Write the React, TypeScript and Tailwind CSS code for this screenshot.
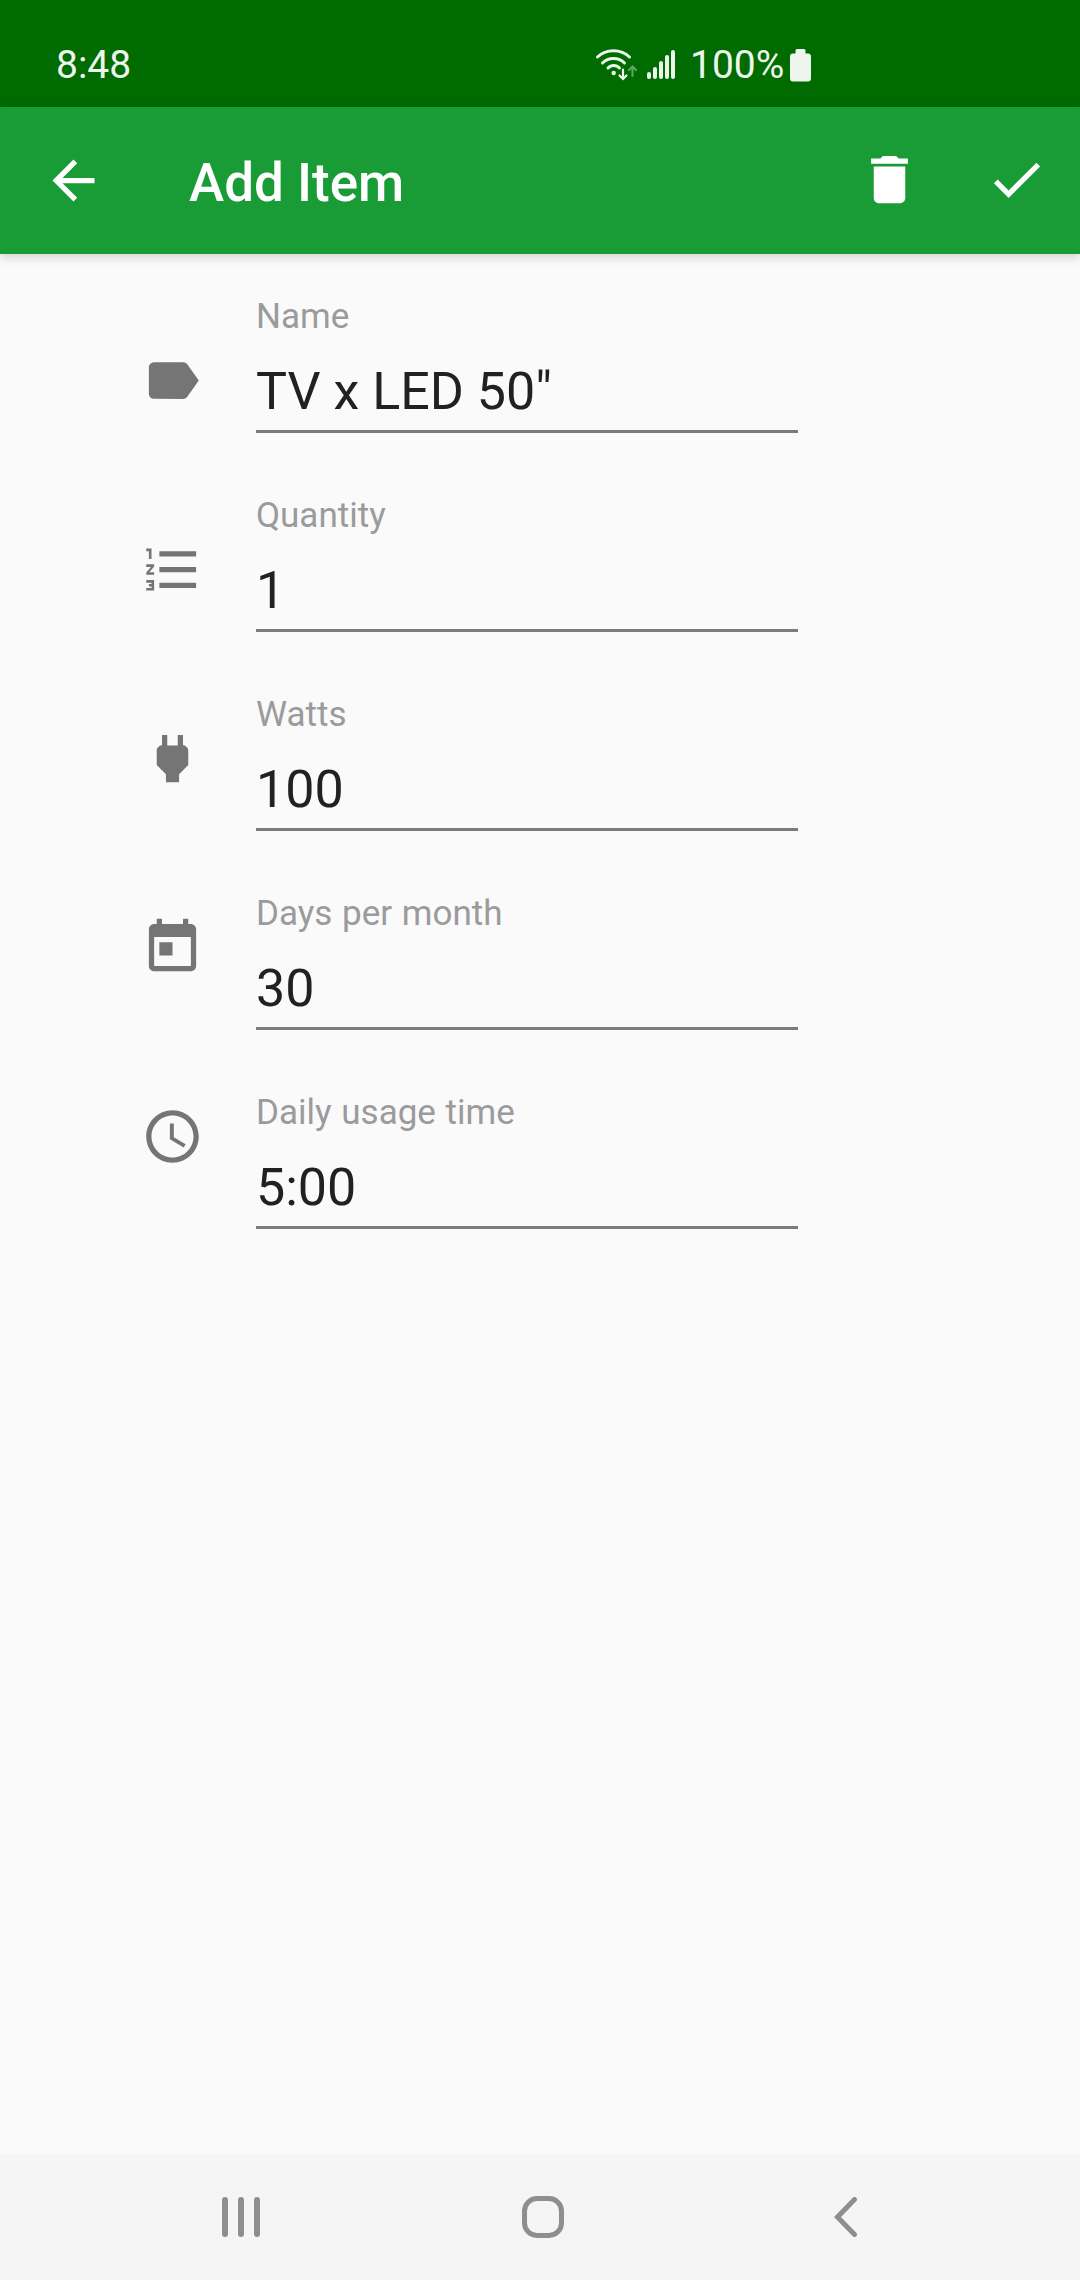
import React from "react";

type IconProps = { d: string; className?: string };

const Icon = ({ d, className = "" }: IconProps) => (
  <svg viewBox="0 0 24 24" fill="currentColor" className={`size-[63px] shrink-0 ${className}`}>
    <path d={d} />
  </svg>
);

const icons = {
  back: "M20 11H7.83l5.59-5.59L12 4l-8 8 8 8 1.41-1.41L7.83 13H20v-2z",
  trash: "M6 19c0 1.1.9 2 2 2h8c1.1 0 2-.9 2-2V7H6v12zM19 4h-3.5l-1-1h-5l-1 1H5v2h14V4z",
  check: "M9 16.17L4.83 12l-1.42 1.41L9 19 21 7l-1.41-1.41z",
  label:
    "M17.63 5.84C17.27 5.33 16.67 5 16 5L5 5.01C3.9 5.01 3 5.9 3 7v10c0 1.1.9 1.99 2 1.99L16 19c.67 0 1.27-.33 1.63-.84L22 12l-4.37-6.16z",
  list: "M2 17h2v.5H3v1h1v.5H2v1h3v-4H2v1zm1-9h1V4H2v1h1v3zm-1 3h1.8L2 13.1v.9h3v-1H3.2L5 10.9V10H2v1zm5-6v2h14V5H7zm0 14h14v-2H7v2zm0-6h14v-2H7v2z",
  plug: "M16.01 7L16 3h-2v4h-4V3H8v4h-.01C7 6.99 6 7.99 6 8.99v5.49L9.5 18v3h5v-3l3.5-3.51v-5.5c0-1-1-2-1.99-1.99z",
  calendar:
    "M19 3h-1V1h-2v2H8V1H6v2H5c-1.11 0-1.99.9-1.99 2L3 19c0 1.1.89 2 2 2h14c1.1 0 2-.9 2-2V5c0-1.1-.9-2-2-2zm0 16H5V8h14v11zM7 10h5v5H7z",
  clock:
    "M11.99 2C6.47 2 2 6.48 2 12s4.47 10 9.99 10C17.52 22 22 17.52 22 12S17.52 2 11.99 2zM12 20c-4.42 0-8-3.58-8-8s3.58-8 8-8 8 3.58 8 8-3.58 8-8 8zm.5-13H11v6l5.25 3.15.75-1.23-4.5-2.67z",
};

const fields = [
  { label: "Name", value: 'TV x LED 50"', icon: icons.label },
  { label: "Quantity", value: "1", icon: icons.list },
  { label: "Watts", value: "100", icon: icons.plug },
  { label: "Days per month", value: "30", icon: icons.calendar },
  { label: "Daily usage time", value: "5:00", icon: icons.clock },
];

function StatusBar() {
  return (
    <div className="flex h-[107px] items-start bg-[#006b00] pl-[56px] pt-[42px] text-[#edf5ed]">
      <span className="w-[537px] text-[39px] leading-[46px]">8:48</span>
      <svg viewBox="0 0 44 34" className="mt-[5px] h-[34px] w-[44px]" fill="none" stroke="currentColor" strokeLinecap="round">
        <g strokeWidth="3">
          <path d="M4.500 10C13 1.500 28 1.500 36.500 10" />
          <path d="M9.500 16C15.500 10 25.500 10 31.500 16" />
          <path d="M15 21C18 17.500 23.500 17.500 26.500 21" />
        </g>
        <circle cx="20.700" cy="26" r="2.200" fill="currentColor" stroke="none" />
        <path d="M30 22.500V31.500M26.500 28.500L30 32L33.500 28.500" strokeWidth="2.200" />
        <path d="M39.500 29V20M36 23L39.500 19.500L43 23" strokeWidth="2.200" opacity=".4" />
      </svg>
      <div className="ml-[10px] mt-[7px] flex h-[30px] items-end gap-[2px]">
        <i className="h-[7px] w-[4px] rounded-full bg-current" />
        <i className="h-[12px] w-[4px] rounded-full bg-current" />
        <i className="h-[18px] w-[4px] rounded-full bg-current" />
        <i className="h-[24px] w-[4px] rounded-full bg-current" />
        <i className="h-[29px] w-[4px] rounded-full bg-current" />
      </div>
      <span className="ml-[15px] w-[95px] whitespace-nowrap text-[39px] leading-[46px]">100%</span>
      <svg viewBox="0 0 21 33" className="ml-[5px] mt-[7px] h-[33px] w-[21px]" fill="currentColor">
        <path d="M7 0H14Q15.500 0 15.500 1.500V4.500H18Q21 4.500 21 7.500V29.500Q21 32.500 18 32.500H3Q0 32.500 0 29.500V7.500Q0 4.500 3 4.500H5.500V1.500Q5.500 0 7 0Z" />
      </svg>
    </div>
  );
}

function AppBar() {
  return (
    <header className="flex h-[147px] items-start bg-[#199b36] pl-[42px] pr-[32px] pt-[41px] text-white shadow-[0_3px_10px_rgba(0,0,0,0.17)]">
      <Icon d={icons.back} className="mt-px" />
      <h1 className="ml-[84px] mt-[4px] flex-1 text-[53px] font-medium leading-[62px]">Add Item</h1>
      <Icon d={icons.trash} />
      <Icon d={icons.check} className="ml-[64px]" />
    </header>
  );
}

function Form() {
  return (
    <main className="flex flex-1 pl-[141px]">
      <div className="flex flex-col gap-[126px] pt-[95px] text-[#757575]">
        {fields.map((f) => (
          <Icon key={f.label} d={f.icon} />
        ))}
      </div>
      <div className="ml-[52px] flex w-[542px] flex-col">
        {fields.map((f) => (
          <div key={f.label} className="flex h-[199px] flex-col pt-[42px]">
            <label className="h-[42px] whitespace-nowrap text-[35px] leading-[42px] text-[#9b9b9b] [word-spacing:1px]">
              {f.label}
            </label>
            <div className="mt-[21px] h-[74px] whitespace-nowrap border-b-3 border-[#7b7b7b] pt-[2px] text-[52px] leading-[62px] text-[#212121]">
              {f.value}
            </div>
          </div>
        ))}
      </div>
    </main>
  );
}

function NavBar() {
  return (
    <nav className="flex h-[126px] items-center bg-[#f5f5f5] pl-[222px] text-[#8e8e8e]">
      <div className="flex h-[40px] gap-[10px]">
        <i className="w-[6px] rounded-full bg-current" />
        <i className="w-[6px] rounded-full bg-current" />
        <i className="w-[6px] rounded-full bg-current" />
      </div>
      <div className="ml-[262px] size-[42px] rounded-[15px] border-5 border-current" />
      <svg viewBox="0 0 24 40" className="ml-[270px] h-[40px] w-[24px]" fill="none" stroke="currentColor" strokeWidth="5" strokeLinecap="round">
        <path d="M20.500 2.500L3.500 20L20.500 37.500" />
      </svg>
    </nav>
  );
}

export default function App() {
  return (
    <div className="flex h-[2280px] w-[1080px] flex-col overflow-hidden bg-[#fafafa] font-[Roboto,sans-serif]">
      <StatusBar />
      <AppBar />
      <Form />
      <NavBar />
    </div>
  );
}
